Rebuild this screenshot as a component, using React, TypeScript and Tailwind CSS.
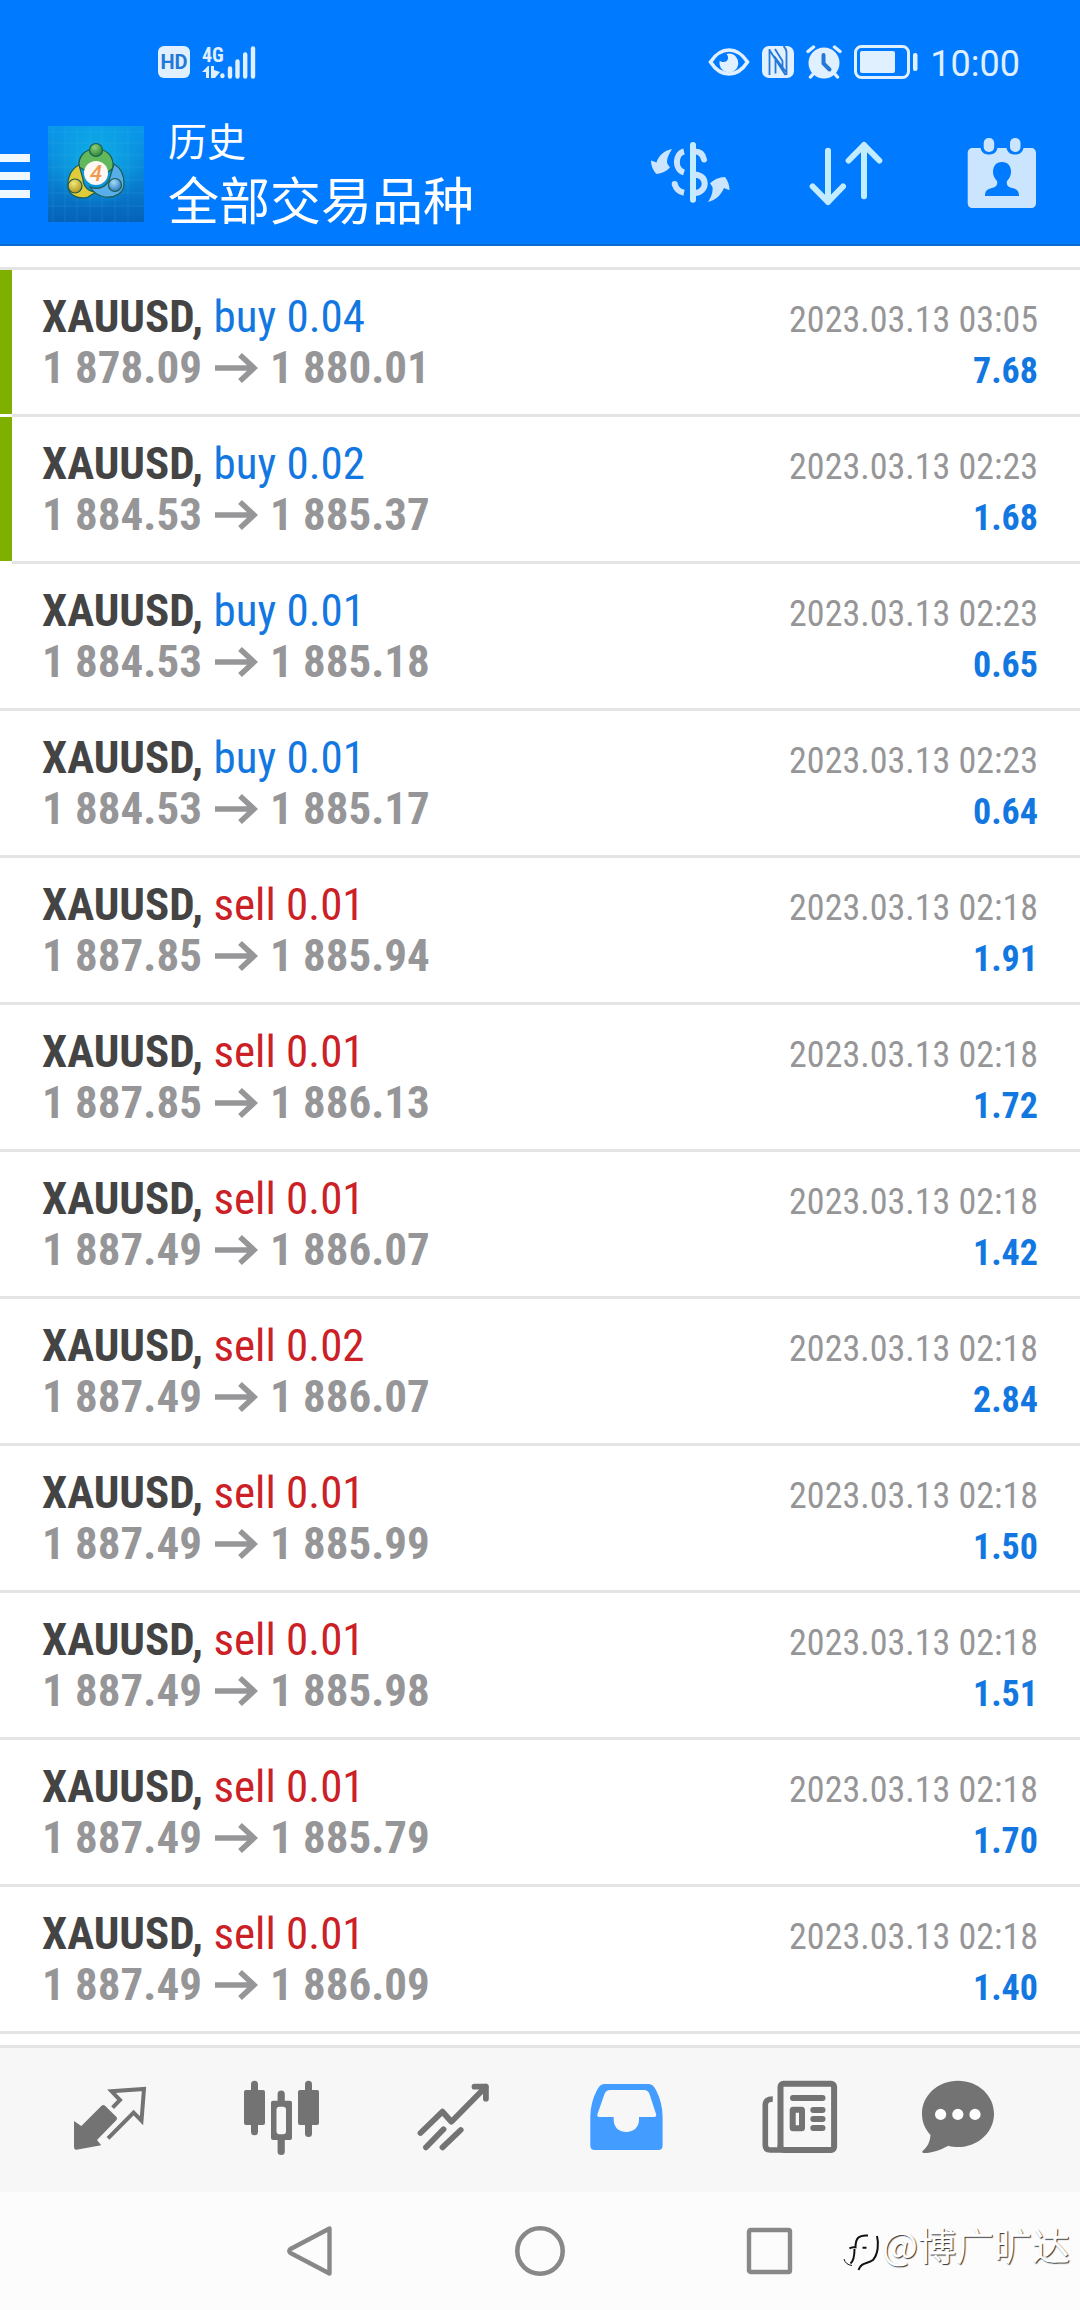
import type { ReactNode } from 'react';

/* -------------------------------------------------------------------------- */
/*  Types                                                                      */
/* -------------------------------------------------------------------------- */

interface Deal {
  side: 'buy' | 'sell';
  volume: string;
  open: string;
  close: string;
  time: string;
  profit: string;
  marked?: boolean;
}

interface Tab {
  label: string;
  icon: ReactNode;
  active?: boolean;
}

/* -------------------------------------------------------------------------- */
/*  Data                                                                       */
/* -------------------------------------------------------------------------- */

const deals: Deal[] = [
  { side: 'buy', volume: '0.04', open: '1 878.09', close: '1 880.01', time: '2023.03.13 03:05', profit: '7.68', marked: true },
  { side: 'buy', volume: '0.02', open: '1 884.53', close: '1 885.37', time: '2023.03.13 02:23', profit: '1.68', marked: true },
  { side: 'buy', volume: '0.01', open: '1 884.53', close: '1 885.18', time: '2023.03.13 02:23', profit: '0.65' },
  { side: 'buy', volume: '0.01', open: '1 884.53', close: '1 885.17', time: '2023.03.13 02:23', profit: '0.64' },
  { side: 'sell', volume: '0.01', open: '1 887.85', close: '1 885.94', time: '2023.03.13 02:18', profit: '1.91' },
  { side: 'sell', volume: '0.01', open: '1 887.85', close: '1 886.13', time: '2023.03.13 02:18', profit: '1.72' },
  { side: 'sell', volume: '0.01', open: '1 887.49', close: '1 886.07', time: '2023.03.13 02:18', profit: '1.42' },
  { side: 'sell', volume: '0.02', open: '1 887.49', close: '1 886.07', time: '2023.03.13 02:18', profit: '2.84' },
  { side: 'sell', volume: '0.01', open: '1 887.49', close: '1 885.99', time: '2023.03.13 02:18', profit: '1.50' },
  { side: 'sell', volume: '0.01', open: '1 887.49', close: '1 885.98', time: '2023.03.13 02:18', profit: '1.51' },
  { side: 'sell', volume: '0.01', open: '1 887.49', close: '1 885.79', time: '2023.03.13 02:18', profit: '1.70' },
  { side: 'sell', volume: '0.01', open: '1 887.49', close: '1 886.09', time: '2023.03.13 02:18', profit: '1.40' },
];

/* -------------------------------------------------------------------------- */
/*  Status bar                                                                 */
/* -------------------------------------------------------------------------- */

function StatusBar() {
  return (
    <div className="flex h-[104px] items-center justify-between pt-5 pr-[60px] pl-[158px] text-[#e0f0ff]">
      <div className="flex items-center gap-3">
        <span className="flex h-8 w-8 items-center justify-center rounded-[6px] bg-[#e0f0ff] font-[Roboto] text-xl leading-none font-bold text-[#2478d8]">
          HD
        </span>
        <div className="flex h-[34px] items-end">
          <div className="flex w-[18px] flex-col">
            <span className="font-['Roboto_Condensed',sans-serif] text-xl leading-5 font-bold">4G</span>
            <svg className="h-[14px] w-[18px]" viewBox="0 0 18 14" fill="currentColor">
              <path d="M0 7 6 1h1v12H4V7ZM9 1h3v4l6 2-5 6H9Z" />
            </svg>
          </div>
          <svg
            className="h-[34px] w-[36px]"
            viewBox="0 0 36 34"
            stroke="currentColor"
            strokeWidth="4.4"
            strokeLinecap="round"
          >
            <path d="M2.400 30.500v.5M10 23.500v8M17.500 16.500v15M25.200 9.500v22M33 3.500v28" />
          </svg>
        </div>
      </div>
      <div className="flex items-center gap-3">
        <svg className="h-8 w-[42px]" viewBox="0 0 42 32" fill="none">
          <path d="M2.500 16C8 7.500 14 4 21 4s13 3.500 18.500 12C34 24.500 28 28 21 28S8 24.500 2.500 16Z" stroke="currentColor" strokeWidth="3.600" />
          <path d="M21 7.500a9.500 9.500 0 1 1-9.300 7c2.600 2.800 7.800 1.800 8.300-2 .3-2-.4-3.500-1.500-4.600Z" fill="currentColor" />
        </svg>
        <svg className="h-8 w-8" viewBox="0 0 32 32" fill="none">
          <rect width="32" height="32" rx="7" fill="currentColor" />
          <path d="M7.500 3v26M13.500 27.500V12l10.500 14M23.500 29 7.500 4M13 3l7.500 12V21M24.500 29V6q0-3-3-6" stroke="#2478d8" strokeWidth="1.800" />
        </svg>
        <svg className="h-[34px] w-9" viewBox="0 0 36 34" fill="none" stroke="currentColor" strokeLinecap="round">
          <circle cx="18" cy="18" r="15.500" fill="currentColor" stroke="none" />
          <path d="M2 6.500 7.500 2M34 6.500 28.500 2M8 28l-3.500 4M28 28l3.500 4" strokeWidth="3.400" />
          <path d="M17.500 10v8.500l6 6" stroke="#2478d8" strokeWidth="4" />
        </svg>
        <svg className="h-[34px] w-[64px]" viewBox="0 0 64 34" fill="none">
          <rect x="1.500" y="1.500" width="53" height="31" rx="6" stroke="currentColor" strokeWidth="3" />
          <rect x="6" y="6" width="35" height="22" rx="2" fill="currentColor" />
          <rect x="59" y="8" width="4.500" height="18" rx="2" fill="currentColor" />
        </svg>
        <span className="pt-1 font-[Roboto] text-4xl leading-10">10:00</span>
      </div>
    </div>
  );
}

/* -------------------------------------------------------------------------- */
/*  Header                                                                     */
/* -------------------------------------------------------------------------- */

function AppLogo() {
  return (
    <svg className="h-24 w-24 shrink-0" viewBox="0 0 96 96">
      <defs>
        <linearGradient id="logo-bg" x1="0" y1="0" x2="0" y2="1">
          <stop offset="0" stopColor="#0a98ea" />
          <stop offset="0.45" stopColor="#0a88d8" />
          <stop offset="1" stopColor="#0562b8" />
        </linearGradient>
        <radialGradient id="logo-glow" cx="0.5" cy="0.35" r="0.5">
          <stop offset="0" stopColor="#10b8e8" stopOpacity="0.8" />
          <stop offset="1" stopColor="#10b8e8" stopOpacity="0" />
        </radialGradient>
        <radialGradient id="logo-green" cx="0.4" cy="0.3" r="0.8">
          <stop offset="0" stopColor="#8ed078" />
          <stop offset="1" stopColor="#1c7a32" />
        </radialGradient>
        <radialGradient id="logo-yellow" cx="0.4" cy="0.3" r="0.8">
          <stop offset="0" stopColor="#f4e878" />
          <stop offset="1" stopColor="#a88a10" />
        </radialGradient>
        <radialGradient id="logo-blue" cx="0.4" cy="0.3" r="0.8">
          <stop offset="0" stopColor="#a4dcfa" />
          <stop offset="1" stopColor="#1a6cb8" />
        </radialGradient>
      </defs>
      <rect width="96" height="96" fill="url(#logo-bg)" />
      <rect width="96" height="96" fill="url(#logo-glow)" />
      <path
        d="M5 0v96M17 0v96M29 0v96M42 0v96M54 0v96M67 0v96M80 0v96M0 6h96M0 17h96M0 29h96M0 41h96M0 54h96M0 67h96M0 80h96"
        stroke="#5cc8f4"
        strokeWidth="0.7"
        opacity="0.2"
      />
      <g stroke="#1c5c50" strokeWidth="1.2">
        <path d="M31 41c-1-10 5-18 17-18s18 8 17 19l-7 6c0-7-4-11-10-11s-9 3-10 8Z" fill="#62b85c" />
        <path d="M31 39c-8 4-12 13-11 22 1 8 10 13 20 10l8-5c-8 0-13-6-13-13Z" fill="#e0cc38" />
        <path d="M66 38c7 4 10 11 10 20 0 9-9 14-19 13-7-1-12-5-15-10 9 4 18-1 20-10Z" fill="#58aee8" />
        <circle cx="48" cy="24" r="6.500" fill="url(#logo-green)" />
        <circle cx="27" cy="60" r="7" fill="url(#logo-yellow)" />
        <circle cx="67" cy="59" r="6.500" fill="url(#logo-blue)" />
      </g>
      <circle cx="48" cy="47" r="12" fill="#fdf8f4" />
      <text x="48" y="55" textAnchor="middle" fontFamily="Roboto" fontSize="22" fontStyle="italic" fontWeight="500" fill="#f09a50">
        4
      </text>
    </svg>
  );
}

function Header() {
  return (
    <header className="border-b-2 border-[#0a6cd0] bg-[#007aff] font-[Roboto,'Noto_Sans_CJK_SC',sans-serif]">
      <StatusBar />
      <div className="flex h-[140px] items-center">
        <button type="button" aria-label="菜单" className="flex w-[30px] shrink-0 flex-col gap-[10px] pt-1">
          <span className="h-2 bg-[#f0f8ff]" />
          <span className="h-2 bg-[#f0f8ff]" />
          <span className="h-2 bg-[#f0f8ff]" />
        </button>
        <div className="ml-[18px] flex flex-1 items-center gap-6">
          <AppLogo />
          <h1 className="flex flex-col pt-0.5 text-white">
            <span className="text-[39px] leading-[56px]">历史</span>
            <span className="text-[51px] leading-[64px]">全部交易品种</span>
          </h1>
        </div>
        <div className="flex text-[#cce5ff]">
          <button type="button" aria-label="按品种筛选" className="flex w-[156px] justify-center">
            <svg className="h-[72px] w-20" viewBox="0 0 80 72" fill="none">
              <path d="M43 7v54.700" stroke="#c4ecff" strokeWidth="6" strokeLinecap="round" />
              <path d="M45 13.500c5 0 8 3 9 8" stroke="currentColor" strokeWidth="6" strokeLinecap="round" />
              <path d="M45 36.500c7 1 9.700 4.500 9.700 9.300 0 5-4 9-9.700 9.300" stroke="currentColor" strokeWidth="6" />
              <path d="M34 13.500c-9 2-10 18 0 21M34 54.800c-5-1-8-4-9.300-8.800" stroke="currentColor" strokeWidth="6" />
              <circle cx="24.700" cy="46" r="3" fill="currentColor" />
              <path d="M22 11c-3 5-6 10-4.500 15l2.500 3.500c-4 4-8 6-13.500 6.500-3-3-5.500-8-5.500-13.500l5.500 2C8.500 17.500 14.500 12.500 22 11Z" fill="currentColor" />
              <path d="M58 64c4-6 5-11 4.500-15L60 45.300c4-4 9-6 15-6.300 3 4 4.500 8 4.500 13.300L74 50c-3 7-8 12-16 14Z" fill="currentColor" />
            </svg>
          </button>
          <button type="button" aria-label="排序" className="flex w-[156px] justify-center">
            <svg
              className="h-[72px] w-20"
              viewBox="0 0 80 72"
              fill="none"
              stroke="#c4ecff"
              strokeWidth="6"
              strokeLinecap="round"
              strokeLinejoin="round"
            >
              <path d="M22 12.700V64M6.700 48.500 22 64l15-15.500M58 58.300V7M42.700 22.500 58 7l15.300 15.500" />
            </svg>
          </button>
          <button type="button" aria-label="选择日期" className="flex w-[156px] justify-center">
            <svg className="h-[72px] w-20" viewBox="0 0 80 72">
              <path
                d="M10 10h8.500c1 4.500 4 6.500 8.500 6.500s7.500-2 8.500-6.500h9c1 4.500 4 6.500 8.500 6.500s7.500-2 8.500-6.500H69c3 0 5 2 5 5v50c0 3-2 5-5 5H10.700c-3 0-5-2-5-5V15c0-3 2-5 5-5Z"
                fill="currentColor"
              />
              <rect x="21.700" y="0" width="10.500" height="14" rx="5" fill="currentColor" />
              <rect x="48" y="0" width="10.500" height="14" rx="5" fill="currentColor" />
              <path
                d="M40 24c6 0 9 4 9 10 0 4-2 7-4 9-1 4 1 6 5 7 5 1 7 3 7 8H23c0-5 2-7 7-8 4-1 6-3 5-7-2-2-4-5-4-9 0-6 3-10 9-10Z"
                fill="#007aff"
              />
            </svg>
          </button>
        </div>
      </div>
    </header>
  );
}

/* -------------------------------------------------------------------------- */
/*  Deal row                                                                   */
/* -------------------------------------------------------------------------- */

function DealRow({ deal }: { deal: Deal }) {
  return (
    <li className="flex">
      <span className={deal.marked ? 'mb-[3px] w-3 bg-[#7fb000]' : 'w-3 border-b-3 border-[#e4e4e4]'} />
      <div className="h-[147px] flex-1 border-b-3 border-[#e4e4e4] pt-[21px] pr-[42px] pl-[30px] leading-[51px]">
        <div className="flex items-baseline justify-between">
          <p className="text-[45px] leading-[51px]">
            <span className="font-bold text-[#444444]">XAUUSD,</span>{' '}
            <span className={deal.side === 'buy' ? 'text-[#1277e1]' : 'text-[#cb2026]'}>
              {deal.side} {deal.volume}
            </span>
          </p>
          <p className="text-4xl text-[#969698]">{deal.time}</p>
        </div>
        <div className="flex items-baseline justify-between font-bold">
          <p className="flex items-center gap-3 text-[45px] leading-[51px] text-[#969698]">
            <span>{deal.open}</span>
            <svg className="h-8 w-[44px]" viewBox="0 0 44 32" fill="none" stroke="currentColor" strokeWidth="5.500" aria-label="→">
              <path d="M1 16h39M26 3l14 13-14 13" />
            </svg>
            <span>{deal.close}</span>
          </p>
          <p className="text-4xl text-[#1277e1]">{deal.profit}</p>
        </div>
      </div>
    </li>
  );
}

/* -------------------------------------------------------------------------- */
/*  Tab bar                                                                    */
/* -------------------------------------------------------------------------- */

const tabs: Tab[] = [
  {
    label: '行情',
    icon: (
      <svg className="h-[84px] w-[84px]" viewBox="0 0 84 84" fill="none">
        <path d="m6 43 7.300 5 20-20q2-2 4 0L48 38.500q2 2 0 4L29 62l4.200 5.300L8.400 71.700Q6 72 6 69Z" fill="currentColor" />
        <path d="m44.600 29.700 7.400-7.700-8.400-8.700L76 11l-2.500 31.700-7.900-8L40 60.300" stroke="currentColor" strokeWidth="4" />
      </svg>
    ),
  },
  {
    label: '图表',
    icon: (
      <svg className="h-[84px] w-[84px]" viewBox="0 0 84 84" fill="currentColor">
        <rect x="4" y="12" width="21" height="35" rx="2" />
        <rect x="11" y="2.700" width="7" height="54.500" rx="3.500" />
        <rect x="58" y="12" width="21" height="35" rx="2" />
        <rect x="65" y="2.700" width="7" height="56.300" rx="3.500" />
        <path d="M33 22.700h4.600v-6.500a3.600 3.600 0 0 1 7.200 0v6.500H50q2 0 2 2V60q0 2-2 2h-5.200v11.500a3.600 3.600 0 0 1-7.200 0V62H33q-2 0-2-2V24.700q0-2 2-2Z" />
        <rect x="36.500" y="28.700" width="9.500" height="27.600" rx="3" fill="#f7f7f7" />
      </svg>
    ),
  },
  {
    label: '交易',
    icon: (
      <svg className="h-[84px] w-[84px]" viewBox="0 0 84 84" fill="none" stroke="currentColor" strokeWidth="5.800">
        <path d="m8.500 55 22-21.300 8.900 10L73.900 8.700M62.500 8.700h11.400v12" strokeLinecap="round" strokeLinejoin="round" />
        <path d="M31.500 51.300 14 69.300M48.700 52 30.500 69.300" strokeLinecap="round" />
      </svg>
    ),
  },
  {
    label: '历史',
    active: true,
    icon: (
      <svg className="h-[84px] w-[84px]" viewBox="0 0 84 84" fill="currentColor" fillRule="evenodd">
        <path d="M20 6h45q4 0 7 6 6.600 13 6.600 27v28.500q0 4.500-4.500 4.500H11q-4.700 0-4.700-4.500V39q0-14 6.700-27 3-6 7-6Zm6 6q-4 0-5.500 4l-7 20q-1 3 2 3h14.200v3c0 7 5 12 12.500 12S55 49 55 42v-3h15q3 0 2-3l-6.500-20Q64 12 60 12Z" />
      </svg>
    ),
  },
  {
    label: '新闻',
    icon: (
      <svg className="h-[84px] w-[84px]" viewBox="0 0 84 84" fill="none" stroke="currentColor" strokeWidth="6">
        <rect x="24.500" y="5.700" width="53.600" height="66.300" rx="3" />
        <path d="M16.800 21q-7.500 0-7.500 6v40q0 5 5 5h12q-2-1-2-5" strokeWidth="5.600" />
        <path d="M37 20h29.500M57.300 32h9.200M57.300 41h9.200M57.300 50h9.200" strokeLinecap="round" />
        <rect x="36.700" y="31.700" width="9.300" height="18.600" rx="0.500" />
      </svg>
    ),
  },
  {
    label: '聊天',
    icon: (
      <svg className="h-[84px] w-[108px]" viewBox="0 0 108 84" fill="currentColor">
        <path d="M42 2.700c20 0 36 14.500 36 33S62 69 42 69c-3.500 0-6.500-.3-9.600-1.300C24 72 17 75 7.500 75q-2-.5-1-2c5-4 7.500-9 8-16C9 51 6 44 6 35.700c0-18.500 16-33 36-33Z" />
        <circle cx="24.600" cy="36.400" r="5.600" fill="#fff" />
        <circle cx="41.800" cy="36.400" r="5.600" fill="#fff" />
        <circle cx="59" cy="36.400" r="5.600" fill="#fff" />
      </svg>
    ),
  },
];

function TabBar() {
  return (
    <nav className="grid h-[147px] grid-cols-6 border-t-3 border-[#e4e4e4] bg-[#f7f7f7] px-6">
      {tabs.map((tab) => (
        <button
          key={tab.label}
          type="button"
          aria-label={tab.label}
          className={`flex items-center justify-center ${tab.active ? 'text-[#439cff]' : 'text-[#737373]'}`}
        >
          {tab.icon}
        </button>
      ))}
    </nav>
  );
}

/* -------------------------------------------------------------------------- */
/*  System navigation                                                          */
/* -------------------------------------------------------------------------- */

function SystemNav() {
  return (
    <div className="relative bg-[#fcfcfc]">
      <div className="grid h-[118px] grid-cols-3 px-[18%] text-[#888888]">
        <button type="button" aria-label="返回" className="flex items-center justify-center">
          <svg className="h-[52px] w-[52px]" viewBox="0 0 52 52" fill="none" stroke="currentColor" strokeWidth="4.400" strokeLinejoin="round">
            <path d="M45.500 3.500v45L6.500 28q-2.500-2 0-4Z" />
          </svg>
        </button>
        <button type="button" aria-label="主页" className="flex items-center justify-center">
          <svg className="h-[52px] w-[52px]" viewBox="0 0 52 52" fill="none" stroke="currentColor" strokeWidth="4.600">
            <circle cx="26" cy="26" r="22.700" />
          </svg>
        </button>
        <button type="button" aria-label="最近任务" className="flex items-center justify-center">
          <svg className="h-[52px] w-[52px]" viewBox="0 0 52 52" fill="none" stroke="currentColor" strokeWidth="4.400">
            <rect x="5" y="5" width="41" height="42" rx="1.500" />
          </svg>
        </button>
      </div>
      {/* Author mark floats over the navigation strip */}
      <div className="absolute top-6 right-[10px] flex items-center gap-0.5 text-white">
        <svg className="h-14 w-10" viewBox="0 0 40 56" fill="none" stroke="#111">
          <path d="M9.500 32.500c1-1 3-1.500 6-1.200 0-9 3-12.500 12.500-11.800M22.500 31.700h4M14.500 33c0 7-1 12-4 14.500" strokeWidth="2" />
          <path d="M37 20c2 8 1 18-4 24-5 4-12 2-14.500 10" strokeWidth="2" />
          <path d="M4 43c1 4 4 6 8 6.500" strokeWidth="1" />
        </svg>
        <span className="font-['Noto_Sans_CJK_SC',sans-serif] text-[38px] leading-[50px] text-shadow-[1px_1px_1px_rgb(0_0_0/0.8)]">
          @博广旷达
        </span>
      </div>
    </div>
  );
}

/* -------------------------------------------------------------------------- */
/*  Page                                                                       */
/* -------------------------------------------------------------------------- */

export default function App() {
  return (
    <div className="min-h-screen bg-white font-['Roboto_Condensed','Liberation_Sans_Narrow',Roboto,sans-serif]">
      <Header />
      <main className="pt-[21px] pb-[11px]">
        <ul className="border-t-3 border-[#e4e4e4]">
          {deals.map((deal, i) => (
            <DealRow key={i} deal={deal} />
          ))}
        </ul>
      </main>
      <TabBar />
      <SystemNav />
    </div>
  );
}
